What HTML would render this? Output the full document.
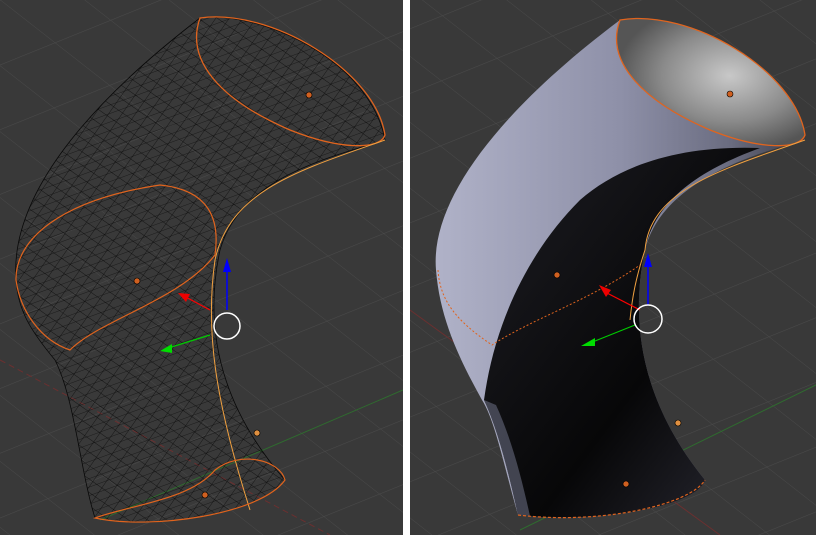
<!DOCTYPE html>
<html><head><style>
html,body{margin:0;padding:0;background:#fff;width:816px;height:535px;overflow:hidden}
svg{display:block}
</style></head><body>
<svg width="816" height="535" viewBox="0 0 816 535" xmlns="http://www.w3.org/2000/svg">
<defs>
<pattern id="grid" width="60" height="60" patternUnits="userSpaceOnUse" patternTransform="rotate(-22) skewX(30)">
<path d="M0 0H60M0 0V60" stroke="#4a4a4a" stroke-width="1" fill="none"/>
</pattern>
<pattern id="wire" width="11" height="11" patternUnits="userSpaceOnUse" patternTransform="rotate(35)">
<path d="M0 0H11M0 0V11" stroke="#000" stroke-width="0.7" fill="none"/>
</pattern>
<pattern id="wire2" width="16" height="8" patternUnits="userSpaceOnUse" patternTransform="rotate(-20)">
<path d="M0 0H16" stroke="#000" stroke-width="0.6" fill="none"/>
</pattern>
<linearGradient id="tube" x1="0" y1="0" x2="1" y2="0">
<stop offset="0" stop-color="#b0b2c8"/><stop offset="0.5" stop-color="#8e90a8"/><stop offset="0.8" stop-color="#6a6c80"/><stop offset="1" stop-color="#3a3a44"/>
</linearGradient>
<linearGradient id="dark" x1="0" y1="0" x2="1" y2="1">
<stop offset="0" stop-color="#1e1e24"/><stop offset="0.6" stop-color="#070708"/><stop offset="1" stop-color="#2a2a34"/>
</linearGradient>
<radialGradient id="cap" cx="0.6" cy="0.45" r="0.6">
<stop offset="0" stop-color="#c8c8c8"/><stop offset="0.6" stop-color="#8a8a8a"/><stop offset="1" stop-color="#555"/>
</radialGradient>
<clipPath id="lc"><rect x="0" y="0" width="403" height="535"/></clipPath>
<clipPath id="rc"><rect x="410" y="0" width="406" height="535"/></clipPath>
</defs>
<g clip-path="url(#lc)">
<rect width="403" height="535" fill="#393939"/>
<rect width="403" height="535" fill="url(#grid)"/>
<line x1="0" y1="360" x2="330" y2="535" stroke="#6b3030" stroke-dasharray="6 4"/>
<line x1="100" y1="520" x2="403" y2="390" stroke="#2f6b2f"/>
<path d="M16 280 C10 200 80 110 200 18 C260 10 370 60 385 140 C320 160 240 180 220 250 C205 320 215 400 285 480 C260 515 150 530 95 518 C80 470 75 400 55 360 C30 330 18 310 16 280Z" fill="url(#wire)" opacity="0.85"/>
<path d="M16 280 C10 200 80 110 200 18 C260 10 370 60 385 140 C320 160 240 180 220 250 C205 320 215 400 285 480 C260 515 150 530 95 518 C80 470 75 400 55 360 C30 330 18 310 16 280Z" fill="url(#wire2)" stroke="#000" stroke-width="0.8" opacity="0.85"/>
<path d="M200 18 C270 8 375 70 385 135 C380 150 340 150 290 130 C220 100 185 60 200 18Z" fill="none" stroke="#e0641e" stroke-width="1.3"/>
<path d="M16 280 C15 240 60 200 160 185 C210 190 220 220 215 255 C180 300 100 320 70 350 C40 340 20 310 16 280Z" fill="none" stroke="#e0641e" stroke-width="1.2"/>
<path d="M385 140 C300 170 230 190 215 260 C205 330 215 400 250 510" fill="none" stroke="#f0a040" stroke-width="1"/>
<path d="M95 518 C150 530 260 515 285 480 C280 460 240 450 215 470 C190 500 130 505 95 518Z" fill="none" stroke="#e0641e" stroke-width="1.2"/>
<circle cx="309" cy="95" r="3" fill="#d06020" stroke="#000" stroke-width="0.6"/>
<circle cx="137" cy="281" r="3" fill="#d06020" stroke="#000" stroke-width="0.6"/>
<circle cx="257" cy="433" r="3" fill="#e09040" stroke="#000" stroke-width="0.6"/>
<circle cx="205" cy="495" r="3" fill="#d06020" stroke="#000" stroke-width="0.6"/>
<line x1="227" y1="310" x2="227" y2="262" stroke="#0000ff" stroke-width="1.5"/>
<path d="M227 258 L223 272 L231 272Z" fill="#0000ff"/>
<line x1="210" y1="310" x2="182" y2="295" stroke="#ff0000" stroke-width="1.2"/>
<path d="M178 293 L190 294 L186 302Z" fill="#ee0000"/>
<line x1="210" y1="335" x2="165" y2="349" stroke="#00cc00" stroke-width="1.2"/>
<path d="M160 351 L172 344 L172 353Z" fill="#00dd00"/>
<circle cx="227" cy="326" r="13" fill="none" stroke="#fff" stroke-width="1.5"/>
</g>
<rect x="403" y="0" width="7" height="535" fill="#ffffff"/>
<g clip-path="url(#rc)">
<rect x="410" width="406" height="535" fill="#393939"/>
<rect x="410" width="406" height="535" fill="url(#grid)"/>
<line x1="410" y1="310" x2="720" y2="535" stroke="#6b3030"/>
<line x1="520" y1="530" x2="816" y2="385" stroke="#2f6b2f"/>
<path d="M436 270 C430 200 500 110 620 20 C680 12 790 70 805 140 C730 160 660 190 645 250 C630 320 640 400 705 480 C700 505 600 525 518 515 C505 470 495 420 482 400 C460 360 440 320 436 270Z" fill="url(#tube)"/>
<path d="M484 400 C495 320 530 250 580 200 C620 165 680 145 760 148 C700 170 655 200 645 250 C630 320 640 400 705 480 C700 505 600 525 518 515 C508 470 498 430 484 400Z" fill="url(#dark)"/>
<path d="M484 400 C498 430 508 470 518 515 L530 516 C522 480 512 440 496 405Z" fill="#5a5c6e" opacity="0.7"/>
<path d="M620 20 C690 8 795 70 805 135 C800 150 760 150 710 130 C640 100 605 60 620 20Z" fill="url(#cap)" stroke="#e0641e" stroke-width="1.3"/>
<path d="M805 140 C720 170 650 190 645 250 C635 280 632 300 630 320" fill="none" stroke="#f0a040" stroke-width="1"/>
<path d="M438 270 C440 300 455 320 492 345 C530 320 590 300 640 265" fill="none" stroke="#e0641e" stroke-width="1" stroke-dasharray="2 2"/>
<path d="M518 515 C600 525 690 505 705 480" fill="none" stroke="#e0641e" stroke-width="1.2" stroke-dasharray="3 2"/>
<circle cx="730" cy="94" r="3" fill="#d06020" stroke="#000" stroke-width="0.6"/>
<circle cx="557" cy="275" r="3" fill="#d06020" stroke="#000" stroke-width="0.6"/>
<circle cx="678" cy="423" r="3" fill="#e09040" stroke="#000" stroke-width="0.6"/>
<circle cx="626" cy="484" r="3" fill="#d06020" stroke="#000" stroke-width="0.6"/>
<line x1="648" y1="305" x2="648" y2="260" stroke="#0000ff" stroke-width="1.5"/>
<path d="M648 253 L644 267 L652 267Z" fill="#0000ff"/>
<line x1="640" y1="310" x2="605" y2="292" stroke="#ff0000" stroke-width="1.2"/>
<path d="M599 285 L611 290 L606 297Z" fill="#ee0000"/>
<line x1="635" y1="325" x2="590" y2="343" stroke="#00cc00" stroke-width="1.2"/>
<path d="M581 346 L595 338 L595 346Z" fill="#00dd00"/>
<circle cx="648" cy="319" r="14" fill="none" stroke="#fff" stroke-width="1.5"/>
</g>
</svg>
</body></html>
